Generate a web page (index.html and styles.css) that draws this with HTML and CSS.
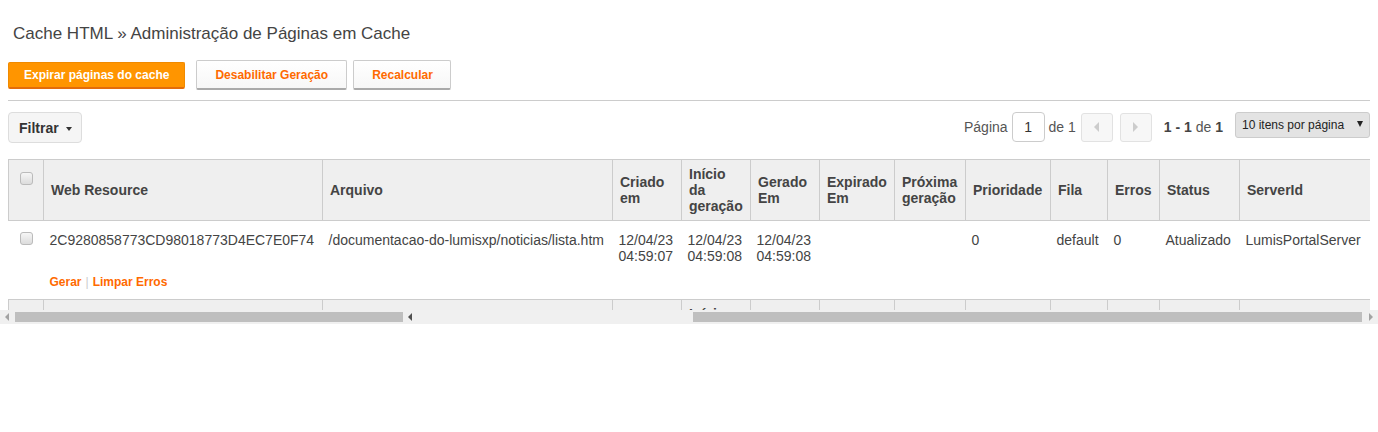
FILE: index.html
```html
<!DOCTYPE html>
<html>

<head>
    <title>Cache HTML</title>
    <link rel="stylesheet" href="styles.css">
</head>

<body>

    <div class="page">
        <h1 class="page-title">Cache HTML » Administração de Páginas em Cache</h1>

        <div class="toolbar">
            <button class="btn btn-primary">Expirar páginas do cache</button>
            <button class="btn btn-default">Desabilitar Geração</button>
            <button class="btn btn-default">Recalcular</button>
        </div>

        <div class="list-bar">
            <button class="filter-btn">Filtrar <span class="caret"></span></button>

            <div class="pager">
                <span>Página</span>
                <input class="page-input" type="text" value="1">
                <span>de 1</span>
                <button class="pager-btn"><span class="arrow-left"></span></button>
                <button class="pager-btn"><span class="arrow-right"></span></button>
                <span class="pager-count"><b>1 - 1</b> de <b>1</b></span>
                <div class="page-size">10 itens por página <span class="caret-dark"></span></div>
            </div>
        </div>

        <div class="grid-wrap">
            <table class="grid">
                <colgroup>
                    <col style="width:35px">
                    <col style="width:279px">
                    <col style="width:290px">
                    <col style="width:69px">
                    <col style="width:69px">
                    <col style="width:69px">
                    <col style="width:75px">
                    <col style="width:71px">
                    <col style="width:85px">
                    <col style="width:57px">
                    <col style="width:52px">
                    <col style="width:80px">
                    <col style="width:131px">
                </colgroup>
                <tr class="head">
                    <th class="check-cell"><span class="check"></span></th>
                    <th>Web Resource</th>
                    <th>Arquivo</th>
                    <th>Criado em</th>
                    <th>Início da geração</th>
                    <th>Gerado Em</th>
                    <th>Expirado Em</th>
                    <th>Próxima geração</th>
                    <th>Prioridade</th>
                    <th>Fila</th>
                    <th>Erros</th>
                    <th>Status</th>
                    <th>ServerId</th>
                </tr>
                <tr class="row">
                    <td class="check-cell"><span class="check"></span></td>
                    <td>2C9280858773CD98018773D4EC7E0F74</td>
                    <td>/documentacao-do-lumisxp/noticias/lista.htm</td>
                    <td>12/04/23 04:59:07</td>
                    <td>12/04/23 04:59:08</td>
                    <td>12/04/23 04:59:08</td>
                    <td></td>
                    <td></td>
                    <td>0</td>
                    <td>default</td>
                    <td>0</td>
                    <td>Atualizado</td>
                    <td>LumisPortalServer</td>
                </tr>
                <tr class="row-actions">
                    <td></td>
                    <td colspan="12"><a href="#">Gerar</a><span class="sep">|</span><a href="#">Limpar Erros</a></td>
                </tr>
                <tr class="head">
                    <th class="check-cell"><span class="check"></span></th>
                    <th>Web Resource</th>
                    <th>Arquivo</th>
                    <th>Criado em</th>
                    <th>Início da geração</th>
                    <th>Gerado Em</th>
                    <th>Expirado Em</th>
                    <th>Próxima geração</th>
                    <th>Prioridade</th>
                    <th>Fila</th>
                    <th>Erros</th>
                    <th>Status</th>
                    <th>ServerId</th>
                </tr>
            </table>
        </div>
    </div>

    <div class="hscroll">
        <span class="sb-arrow left light"></span>
        <span class="sb-thumb first"></span>
        <span class="sb-arrow left dark"></span>
        <span class="sb-gap"></span>
        <span class="sb-thumb second"></span>
        <span class="sb-arrow right light"></span>
    </div>

</body>

</html>
```

FILE: styles.css
```css
body {
    margin: 0;
    font-family: "Liberation Sans", Arial, sans-serif;
    color: #444;
    background: #fff;
}

.page {
    padding: 0 8px;
}

.page-title {
    margin: 24px 0 0;
    padding-left: 5px;
    font-size: 17px;
    line-height: 20px;
    font-weight: normal;
    color: #444;
}

.toolbar {
    display: flex;
    align-items: center;
    margin-top: 16px;
    padding-bottom: 10px;
    border-bottom: 1px solid #ccc;
}

.btn {
    font-family: inherit;
    font-size: 12px;
    font-weight: bold;
    cursor: pointer;
}

.btn-primary {
    height: 27px;
    padding: 0 15px;
    margin-right: 11px;
    color: #fff;
    background: #ff9500;
    border: 1px solid #f08a00;
    border-bottom: 2px solid #e36c0a;
    border-radius: 2px;
}

.btn-default {
    height: 30px;
    padding: 0 18px;
    margin-right: 6px;
    color: #ff6a00;
    background: linear-gradient(#fff, #f7f7f7);
    border: 1px solid #ccc;
    border-bottom: 2px solid #aaa;
    border-radius: 2px;
}

.btn-default:last-child {
    padding: 0 17px 0 18px;
}

.list-bar {
    display: flex;
    justify-content: space-between;
    align-items: flex-start;
    margin-top: 11px;
}

.filter-btn {
    height: 31px;
    padding: 0 9px 0 10px;
    font-family: inherit;
    font-size: 14px;
    font-weight: bold;
    color: #333;
    background: #f5f5f5;
    border: 1px solid #ddd;
    border-radius: 4px;
}

.caret {
    display: inline-block;
    margin-left: 3px;
    vertical-align: 2px;
    border-left: 3px solid transparent;
    border-right: 3px solid transparent;
    border-top: 4px solid #333;
}

.pager {
    display: flex;
    align-items: center;
    font-size: 14px;
    color: #555;
    height: 30px;
}

.page-input {
    width: 33px;
    height: 30px;
    box-sizing: border-box;
    margin: 0 4px;
    text-align: center;
    font-family: inherit;
    font-size: 14px;
    color: #333;
    border: 1px solid #ccc;
    border-radius: 4px;
}

.pager-btn {
    width: 32px;
    height: 29px;
    margin-left: 7px;
    padding: 0;
    background: #f7f7f7;
    border: 1px solid #e2e2e2;
    border-radius: 3px;
    display: flex;
    align-items: center;
    justify-content: center;
}

.pager-btn:first-of-type {
    margin-left: 5px;
}

.arrow-left {
    border-top: 5px solid transparent;
    border-bottom: 5px solid transparent;
    border-right: 5px solid #ccc;
}

.arrow-right {
    border-top: 5px solid transparent;
    border-bottom: 5px solid transparent;
    border-left: 5px solid #ccc;
}

.pager-count {
    margin-left: 12px;
    color: #555;
}

.pager-count b {
    color: #444;
}

.page-size {
    align-self: flex-start;
    margin-left: 12px;
    width: 135px;
    height: 26px;
    box-sizing: border-box;
    padding: 0 6px;
    display: flex;
    align-items: center;
    justify-content: space-between;
    font-size: 12px;
    color: #222;
    background: #e3e3e3;
    border: 1px solid #ccc;
    border-radius: 3px;
}

.caret-dark {
    border-left: 3px solid transparent;
    border-right: 3px solid transparent;
    border-top: 6px solid #222;
    margin-top: -2px;
}

.grid-wrap {
    margin-top: 16px;
    height: 151px;
    overflow: hidden;
}

.grid {
    width: 1362px;
    table-layout: fixed;
    border-collapse: collapse;
    font-size: 14px;
    line-height: 16px;
}

.grid th {
    background: #efefef;
    border: 1px solid #ccc;
    padding: 6px 6px 6px 7px;
    text-align: left;
    vertical-align: middle;
    font-weight: bold;
    color: #444;
}

.grid th.check-cell {
    vertical-align: top;
    padding-top: 12px;
    padding-left: 11px;
}

.grid td {
    padding: 11px 6px 9px 6px;
    vertical-align: top;
    color: #444;
    white-space: normal;
}

.grid td.check-cell {
    padding-left: 11px;
}

.check {
    display: block;
    width: 11px;
    height: 11px;
    border: 1px solid #bbb;
    border-radius: 3px;
    background: linear-gradient(#f6f6f6, #dcdcdc);
}

.row-actions td {
    padding: 1px 6px 9px 6px;
    font-size: 12px;
    font-weight: bold;
}

.row-actions a {
    color: #ff6a00;
    text-decoration: none;
}

.sep {
    color: #ccc;
    font-weight: normal;
    margin: 0 4px;
}

.hscroll {
    display: flex;
    align-items: center;
    height: 14px;
    background: #f0f0f0;
}

.sb-arrow {
    width: 0;
    height: 0;
    border-top: 4px solid transparent;
    border-bottom: 4px solid transparent;
}

.sb-arrow.left {
    border-right: 4px solid #a3a3a3;
}

.sb-arrow.right {
    border-left: 4px solid #a3a3a3;
}

.sb-arrow.dark {
    border-right-color: #505050;
}

.sb-arrow.light.left {
    margin-left: 5px;
}

.sb-thumb {
    height: 10px;
    background: #bfbfbf;
}

.sb-thumb.first {
    width: 388px;
    margin-left: 6px;
    margin-right: 5px;
}

.sb-gap {
    width: 281px;
}

.sb-thumb.second {
    width: 669px;
    margin-right: 7px;
}
```
